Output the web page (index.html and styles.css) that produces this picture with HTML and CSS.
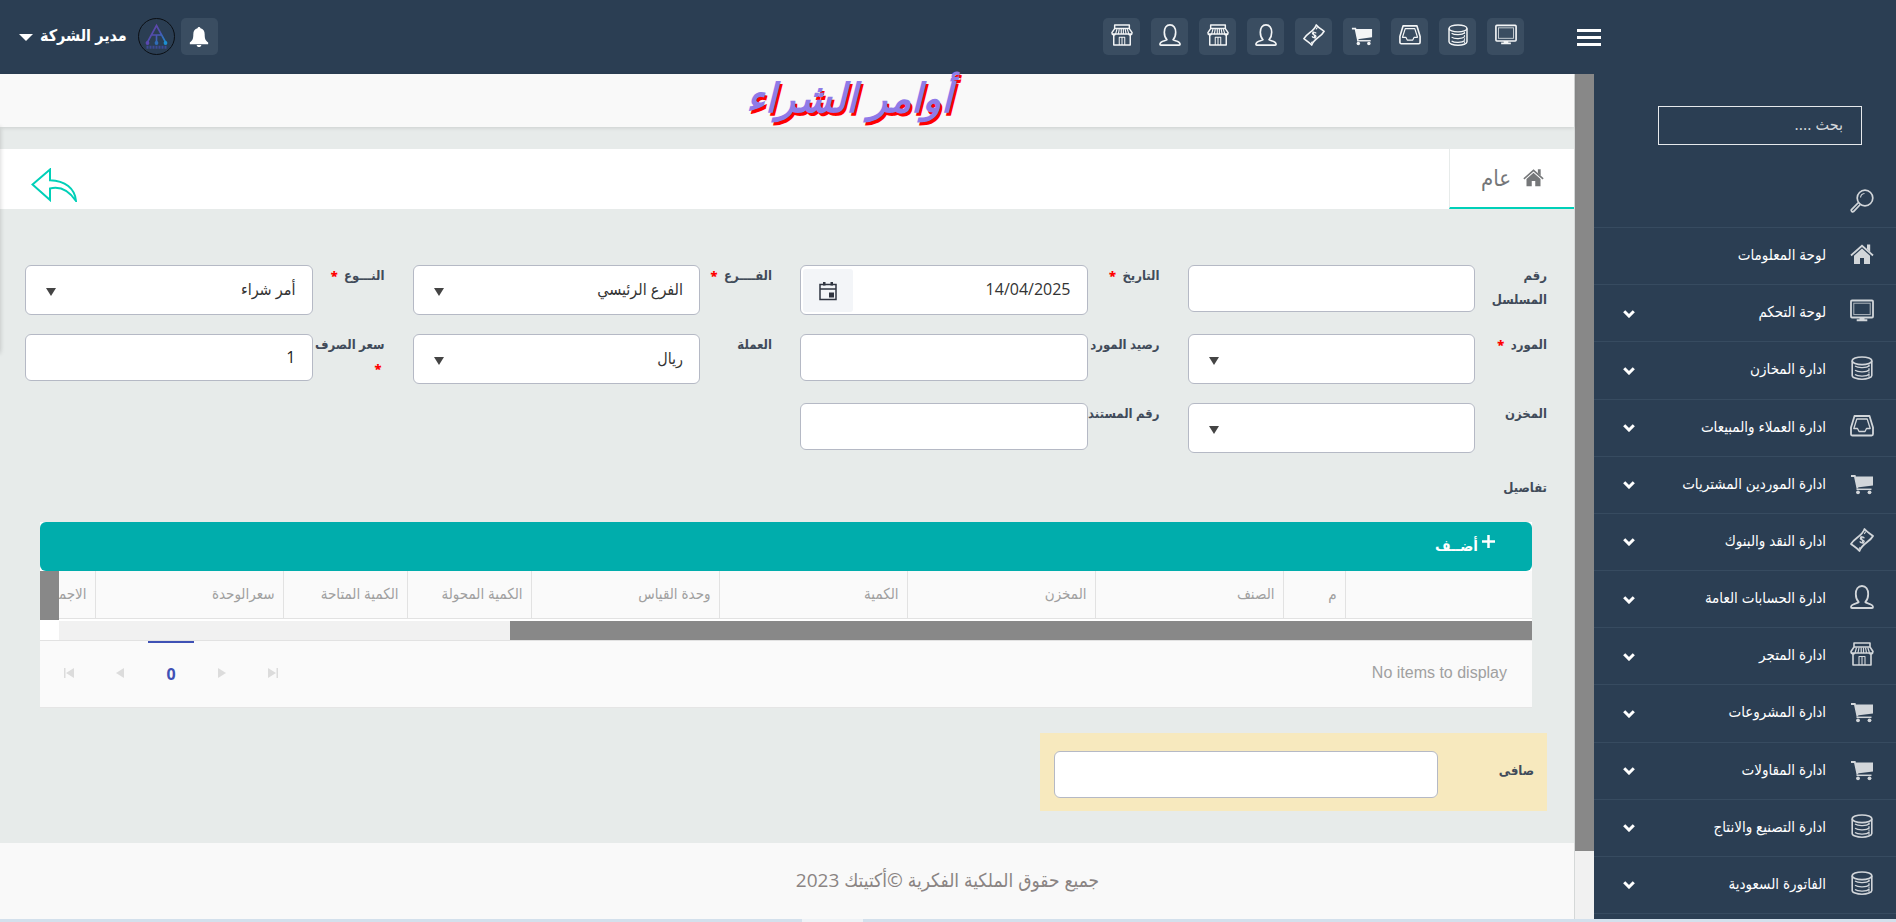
FILE: index.html
```html
<!DOCTYPE html>
<html lang="ar" dir="rtl">
<head>
  <meta charset="UTF-8" />
  <meta name="viewport" content="width=device-width, initial-scale=1.0" />
  <title>أوامر الشراء</title>
  <link rel="stylesheet" href="styles.css">
</head>
<body>

  <!-- Icons -->
  <svg class="sprite" aria-hidden="true">
    <symbol id="i-monitor" viewBox="0 0 24 24">
      <rect x="1" y="1.5" width="22" height="17" rx="1" fill="none" stroke="currentColor" stroke-width="1.8"/>
      <rect x="3.8" y="4.2" width="16.4" height="11.4" fill="none" stroke="currentColor" stroke-width="1" opacity=".8"/>
      <path d="M9.5 18.5h5v1.8h2.8v1.9H6.7v-1.9h2.8z" fill="currentColor"/>
    </symbol>
    <symbol id="i-database" viewBox="0 0 24 24">
      <g fill="none" stroke="currentColor" stroke-width="1.6">
        <ellipse cx="12" cy="4.8" rx="9.8" ry="3.8"/>
        <path d="M2.2 4.8v14.6c0 2 4.4 3.8 9.8 3.8s9.8-1.8 9.8-3.8V4.8"/>
        <path d="M5 10c3 2.2 11.5 2.2 14.5-.5M5 14.3c3 2.2 11.5 2.2 14.5-.5M5 18.5c3 2.2 11.5 2.2 14.5-.5" stroke-width="1.3"/>
        <path d="M19 8.5v13" stroke-width="1" stroke-dasharray="2 1.5"/>
      </g>
    </symbol>
    <symbol id="i-inbox" viewBox="0 0 24 24">
      <g fill="none" stroke="currentColor" stroke-linejoin="round">
        <path d="M4.5 2h15L23 13.5V20c0 .8-.5 1.5-1.5 1.5h-19C1.500 21.5 1 20.8 1 20v-6.5z" stroke-width="1.8"/>
        <path d="M6.8 5h10.4l3 9.5h-3.7l-1.5 3H9l-1.500-3H3.8z" stroke-width="1.3"/>
      </g>
    </symbol>
    <symbol id="i-cart" viewBox="0 0 24 24">
      <path d="M1 5h3.800l2.700 12.5" fill="none" stroke="currentColor" stroke-width="1.8"/>
      <path d="M5 5.500h18v9L7 16.500z" fill="currentColor"/>
      <path d="M6.500 18.300h15" stroke="currentColor" stroke-width="1.5"/>
      <circle cx="8" cy="21.3" r="1.9" fill="currentColor"/>
      <circle cx="19.5" cy="21.3" r="1.9" fill="currentColor"/>
    </symbol>
    <symbol id="i-money" viewBox="0 0 24 24">
      <g fill="none" stroke="currentColor" stroke-linejoin="round" stroke-linecap="round">
        <path d="M14.5 1c2.5 3 6 5 8.500 7C19.500 14.500 12 15.500 9.500 23 7 20 3.500 18 1 16 4.500 9.500 12 8.500 14.500 1z" stroke-width="1.8"/>
        <path d="M14 9.800c-1.200-1.300-3.800-1-3.700.6.1 1.800 3.700 1.200 3.900 3 .1 1.800-3.100 1.900-4.100.4M11 8.500l2.200 7" stroke-width="1.3"/>
        <path d="M14.500 5.500l1-1.500M10 19.500l-.8 1" stroke-width="1.2"/>
      </g>
    </symbol>
    <symbol id="i-user" viewBox="0 0 24 24">
      <path d="M12 1C8 1 5.800 4.500 5.800 9c0 3.500 1.300 6.500 2.900 8.200C7.500 18.500 1 18.500 1 22c0 .6.4 1 1 1h20c.6 0 1-.4 1-1 0-3.500-6.500-3.500-7.700-4.800C16.900 15.500 18.200 12.500 18.200 9 18.200 4.500 16 1 12 1z" fill="none" stroke="currentColor" stroke-width="1.8" stroke-linejoin="round"/>
    </symbol>
    <symbol id="i-shop" viewBox="0 0 24 24">
      <g fill="none" stroke="currentColor" stroke-width="1.6" stroke-linejoin="round">
        <path d="M4 1h16v4H4zM4 5L1 9.500c0 3 3.500 3 4 1M20 5l3 4.500c0 3-3.500 3-4 1M1.500 11h21"/>
        <path d="M3 12v11h18V12"/>
        <path d="M9 23v-8.500h6V23M12 15v8" stroke-width="1.1"/>
        <path d="M6.500 5.500L5 11M9 5.500L8 11M11.200 5.500V11M13.500 5.500V11M15.500 5.500L16.500 11M17.800 5.500L19.500 11" stroke-width="1.2"/>
      </g>
    </symbol>
    <symbol id="i-home" viewBox="0 0 24 24">
      <path d="M12 6.500l8 7.200V22h-6v-6h-4v6H4v-8.300z" fill="currentColor"/>
      <path d="M1 13.500L12 3.800l11 9.700" fill="none" stroke="currentColor" stroke-width="1.800"/>
      <path d="M17 2.500h3.200V10L17 7z" fill="currentColor"/>
    </symbol>
    <symbol id="i-search" viewBox="0 0 24 24">
      <g fill="none" stroke="currentColor" stroke-width="1.7">
        <circle cx="15" cy="9" r="7.8"/>
        <path d="M10.500 8.500c.3-2.300 1.800-3.800 4-4" stroke-width="1.2"/>
        <path d="M8.500 13.500l-7 7.200c-.8.8.9 2.900 2 2l6.800-7.200" stroke-linejoin="round"/>
      </g>
    </symbol>
    <symbol id="i-bell" viewBox="0 0 24 24">
      <path d="M12 1c.9 0 1.500.6 1.600 1.500 3 .7 4.600 3.200 4.600 6.500 0 5 1 7 3.800 9v1.800H2V18c2.800-2 3.800-4 3.800-9 0-3.300 1.600-5.800 4.600-6.500C10.500 1.600 11.100 1 12 1zM9.400 20.700h5.200c-.2 1.400-1.200 2.300-2.600 2.300s-2.400-.9-2.600-2.300z" fill="currentColor"/>
    </symbol>
    <symbol id="i-chevron" viewBox="0 0 12 8">
      <path d="M1.200 1.200L6 6l4.800-4.800" fill="none" stroke="currentColor" stroke-width="3"/>
    </symbol>
  </svg>

  <!-- Top bar -->
  <header class="topbar">
    <button class="menu-toggle" type="button" aria-label="القائمة">
      <span></span><span></span><span></span>
    </button>
    <nav class="shortcuts">
      <a class="tile" href="#"><svg><use href="#i-monitor"/></svg></a>
      <a class="tile" href="#"><svg><use href="#i-database"/></svg></a>
      <a class="tile" href="#"><svg><use href="#i-inbox"/></svg></a>
      <a class="tile" href="#"><svg><use href="#i-cart"/></svg></a>
      <a class="tile" href="#"><svg><use href="#i-money"/></svg></a>
      <a class="tile" href="#"><svg><use href="#i-user"/></svg></a>
      <a class="tile" href="#"><svg><use href="#i-shop"/></svg></a>
      <a class="tile" href="#"><svg><use href="#i-user"/></svg></a>
      <a class="tile" href="#"><svg><use href="#i-shop"/></svg></a>
    </nav>
    <div class="account">
      <button class="tile" type="button" aria-label="الإشعارات"><svg><use href="#i-bell"/></svg></button>
      <svg class="avatar" viewBox="0 0 37 37">
        <defs>
          <linearGradient id="logo" x1="0" y1="0" x2="1" y2="1">
            <stop offset="0" stop-color="#6a3fa8"/>
            <stop offset=".5" stop-color="#4f4fb0"/>
            <stop offset="1" stop-color="#1c8fd0"/>
          </linearGradient>
        </defs>
        <circle cx="18.5" cy="18.5" r="18" fill="none" stroke="#0b0f14"/>
        <path d="M9 25L18.500 7.500 28 25M13.500 17h10M18.500 17v8" fill="none" stroke="url(#logo)" stroke-width="1.6"/>
        <circle cx="9.5" cy="25" r="1.9" fill="#5a48b0"/>
        <circle cx="18.5" cy="25" r="1.9" fill="#2f6cb8"/>
        <circle cx="27.5" cy="25" r="1.9" fill="#1c8fd0"/>
        <path d="M8.500 29.300h20" stroke="#3d4a94" stroke-width="3" stroke-dasharray="2 1"/>
      </svg>
      <button class="user-name" type="button">مدير الشركة</button>
    </div>
  </header>

  <div class="layout">

    <!-- Sidebar -->
    <aside class="sidebar">
      <div class="search">
        <input type="text" placeholder="بحث ...." aria-label="بحث">
        <svg class="side-icon"><use href="#i-search"/></svg>
      </div>
      <ul class="menu">
        <li><a href="#"><svg class="side-icon"><use href="#i-home"/></svg>لوحة المعلومات</a></li>
        <li><a href="#"><svg class="side-icon"><use href="#i-monitor"/></svg>لوحة التحكم<svg class="chevron"><use href="#i-chevron"/></svg></a></li>
        <li><a href="#"><svg class="side-icon"><use href="#i-database"/></svg>ادارة المخازن<svg class="chevron"><use href="#i-chevron"/></svg></a></li>
        <li><a href="#"><svg class="side-icon"><use href="#i-inbox"/></svg>ادارة العملاء والمبيعات<svg class="chevron"><use href="#i-chevron"/></svg></a></li>
        <li><a href="#"><svg class="side-icon"><use href="#i-cart"/></svg>ادارة الموردين المشتريات<svg class="chevron"><use href="#i-chevron"/></svg></a></li>
        <li><a href="#"><svg class="side-icon"><use href="#i-money"/></svg>ادارة النقد والبنوك<svg class="chevron"><use href="#i-chevron"/></svg></a></li>
        <li><a href="#"><svg class="side-icon"><use href="#i-user"/></svg>ادارة الحسابات العامة<svg class="chevron"><use href="#i-chevron"/></svg></a></li>
        <li><a href="#"><svg class="side-icon"><use href="#i-shop"/></svg>ادارة المتجر<svg class="chevron"><use href="#i-chevron"/></svg></a></li>
        <li><a href="#"><svg class="side-icon"><use href="#i-cart"/></svg>ادارة المشروعات<svg class="chevron"><use href="#i-chevron"/></svg></a></li>
        <li><a href="#"><svg class="side-icon"><use href="#i-cart"/></svg>ادارة المقاولات<svg class="chevron"><use href="#i-chevron"/></svg></a></li>
        <li><a href="#"><svg class="side-icon"><use href="#i-database"/></svg>ادارة التصنيع والانتاج<svg class="chevron"><use href="#i-chevron"/></svg></a></li>
        <li><a href="#"><svg class="side-icon"><use href="#i-database"/></svg>الفاتورة السعودية<svg class="chevron"><use href="#i-chevron"/></svg></a></li>
      </ul>
    </aside>

    <div class="page-scroll"><div class="page-thumb"></div></div>

    <main class="content">
      <div class="page-title"><h1>أوامر الشراء</h1></div>

      <!-- Tabs -->
      <div class="tabs">
        <a class="tab" href="#"><svg><use href="#i-home"/></svg>عام</a>
        <a class="back" href="#" aria-label="رجوع">
          <svg viewBox="0 0 46 34">
            <path d="M19 1.500L1.500 16.500 19 32V20.500c8-2 17.500 0 26 12.500C44 20.500 34 12.500 19 12.200z" fill="none" stroke="currentColor" stroke-width="2"/>
          </svg>
        </a>
      </div>

      <!-- Form -->
      <form class="order">
        <div class="fields">
          <div class="field">
            <label class="wrap" for="serial">رقم المسلسل</label>
            <input class="control" type="text" id="serial">
          </div>
          <div class="field">
            <label for="date">التاريخ <b>*</b></label>
            <div class="date-box">
              <input class="control tall" type="text" id="date" value="14/04/2025">
              <button class="calendar" type="button" aria-label="التقويم">
                <svg viewBox="0 0 18 20">
                  <path d="M1 3.500h16V18.500H1zM1 8h16" fill="none" stroke="currentColor" stroke-width="1.5"/>
                  <path d="M4 1h2.500v3.500H4zM11.500 1H14v3.500h-2.500zM10 11.500h5v5h-5z" fill="currentColor"/>
                </svg>
              </button>
            </div>
          </div>
          <div class="field">
            <label for="branch">الفــــرع <b>*</b></label>
            <div class="select-box"><select class="control tall" id="branch"><option>الفرع الرئيسي</option></select></div>
          </div>
          <div class="field">
            <label for="kind">النـــوع <b>*</b></label>
            <div class="select-box"><select class="control tall" id="kind"><option>أمر شراء</option></select></div>
          </div>

          <div class="field">
            <label for="supplier">المورد <b>*</b></label>
            <div class="select-box"><select class="control tall" id="supplier"><option></option></select></div>
          </div>
          <div class="field">
            <label for="balance">رصيد المورد</label>
            <input class="control" type="text" id="balance">
          </div>
          <div class="field">
            <label for="currency">العملة</label>
            <div class="select-box"><select class="control tall" id="currency"><option>ريال</option></select></div>
          </div>
          <div class="field">
            <label class="wrap" for="rate">سعر الصرف <b>*</b></label>
            <input class="control" type="text" id="rate" value="1">
          </div>

          <div class="field">
            <label for="store">المخزن</label>
            <div class="select-box"><select class="control tall" id="store"><option></option></select></div>
          </div>
          <div class="field">
            <label for="docno">رقم المستند</label>
            <input class="control" type="text" id="docno">
          </div>
        </div>

        <h2 class="details-title">تفاصيل</h2>

        <!-- Items grid -->
        <div class="grid">
          <div class="grid-toolbar">
            <button class="add" type="button"><svg viewBox="0 0 13 13"><path d="M6.500 0v13M0 6.500h13" stroke="currentColor" stroke-width="2.5"/></svg>أضــف</button>
          </div>
          <div class="grid-head">
            <div class="grid-columns">
              <table>
                <colgroup>
                  <col class="c-tools"><col class="c-num"><col class="c-wide"><col class="c-wide"><col class="c-wide">
                  <col class="c-wide"><col class="c-mid"><col class="c-mid"><col class="c-wide"><col class="c-wide">
                </colgroup>
                <thead>
                  <tr>
                    <th></th>
                    <th>م</th>
                    <th>الصنف</th>
                    <th>المخزن</th>
                    <th>الكمية</th>
                    <th>وحدة القياس</th>
                    <th>الكمية المحولة</th>
                    <th>الكمية المتاحة</th>
                    <th>سعرالوحدة</th>
                    <th>الاجمالي</th>
                  </tr>
                </thead>
              </table>
            </div>
            <div class="grid-vscroll"></div>
          </div>
          <div class="grid-hscroll"><div class="grid-thumb"></div></div>
          <div class="pager">
            <span class="pager-info" dir="ltr">No items to display</span>
            <div class="pager-nav">
              <button type="button" aria-label="الأخير"><svg viewBox="0 0 10 10"><path d="M0 0l8 5-8 5zM8.500 0H10v10H8.500z" fill="currentColor"/></svg></button>
              <button type="button" aria-label="التالي"><svg viewBox="0 0 10 10"><path d="M1 0l8 5-8 5z" fill="currentColor"/></svg></button>
              <button type="button" class="current">0</button>
              <button type="button" aria-label="السابق"><svg viewBox="0 0 10 10"><path d="M9 0L1 5l8 5z" fill="currentColor"/></svg></button>
              <button type="button" aria-label="الأول"><svg viewBox="0 0 10 10"><path d="M10 0L2 5l8 5zM0 0h1.500v10H0z" fill="currentColor"/></svg></button>
            </div>
          </div>
        </div>

        <div class="net">
          <label for="net">صافى</label>
          <input class="control" type="text" id="net">
        </div>
      </form>

      <footer class="footer">جميع حقوق الملكية الفكرية ©أكتيتك 2023</footer>
    </main>
  </div>

  <div class="status-strip"><span></span></div>

</body>
</html>
```

FILE: styles.css
```css
* {
  box-sizing: border-box;
}

body {
  margin: 0;
  height: 100vh;
  display: flex;
  flex-direction: column;
  overflow: hidden;
  font-family: "Open Sans", "DejaVu Sans Condensed", "DejaVu Sans", sans-serif;
  font-size: 15px;
  color: #414b5a;
  background-color: #e7ebea;
}

a {
  color: inherit;
  text-decoration: none;
}

button {
  border: none;
  padding: 0;
  background: none;
  font-family: inherit;
  color: inherit;
  cursor: pointer;
}

.sprite {
  position: absolute;
  width: 0;
  height: 0;
}

/* Top bar */
.topbar {
  display: flex;
  align-items: flex-start;
  height: 74px;
  padding: 18px 295px 0 19px;
  background-color: #2b3e53;
  color: #fff;
}

.menu-toggle {
  display: flex;
  flex-direction: column;
  gap: 4px;
  width: 24px;
  margin: 11px 0 0 53px;
}

.menu-toggle span {
  width: 24px;
  height: 3px;
  background-color: #fff;
}

.shortcuts {
  display: flex;
  gap: 11px;
}

.tile {
  display: flex;
  justify-content: center;
  width: 37px;
  height: 37px;
  padding-top: 6px;
  border-radius: 5px;
  background-color: #3a4d61;
  color: #f3f5f6;
}

.tile svg {
  width: 22px;
  height: 22px;
}

.account {
  display: flex;
  margin-right: auto;
}

.account .tile {
  padding-top: 8px;
  color: #fff;
}

.avatar {
  width: 37px;
  height: 37px;
  margin: 0 6px 0 11px;
}

.user-name {
  display: flex;
  align-items: center;
  gap: 7px;
  height: 34px;
  font-size: 16px;
  font-weight: bold;
}

.user-name::after {
  content: "";
  margin-top: 5px;
  border: 7px solid transparent;
  border-top-color: #fff;
  border-bottom: none;
}

/* Layout */
.layout {
  flex: 1;
  display: flex;
  min-height: 0;
}

.sidebar {
  display: flex;
  flex-direction: column;
  flex: none;
  width: 302px;
  padding-bottom: 5px;
  background-color: #2b3e53;
  color: #fff;
}

.search {
  height: 153px;
  padding: 32px 22px 0 34px;
}

.search input {
  display: block;
  width: 204px;
  height: 39px;
  margin-right: 12px;
  padding: 0 18px 4px;
  border: 1px solid #e6e9ec;
  background: none;
  font-family: inherit;
  font-size: 16px;
  color: #d5d8dc;
}

.search input::placeholder {
  color: #d5d8dc;
  opacity: 1;
}

.search .side-icon {
  display: block;
  margin-top: 44px;
}

.side-icon {
  flex: none;
  width: 24px;
  height: 24px;
  color: #d2d6da;
}

.menu {
  flex: 1;
  display: flex;
  flex-direction: column;
  margin: 0;
  padding: 0;
  list-style: none;
  border-bottom: 1px solid #374b60;
}

.menu li {
  flex: 1;
  border-top: 1px solid #374b60;
}

.menu a {
  display: flex;
  align-items: center;
  height: 100%;
  padding: 0 22px 4px 29px;
}

.menu .side-icon {
  margin-left: 24px;
}

.chevron {
  width: 12px;
  height: 8px;
  margin: 5px auto 0 0;
}

.page-scroll {
  flex: none;
  width: 20px;
  border-left: 1px solid #d5d8d8;
  background-color: #f1f1f1;
}

.page-thumb {
  height: 92%;
  background-color: #888;
}

/* Content */
.content {
  position: relative;
  flex: 1;
  min-width: 0;
  display: flex;
  flex-direction: column;
}

.content::before {
  content: "";
  position: absolute;
  top: 53px;
  left: -10px;
  width: 10px;
  height: 226px;
  box-shadow: 0 0 5px rgba(0, 0, 0, 0.2);
}

.page-title {
  height: 53px;
  padding-left: 124px;
  background-color: #f9f9f9;
  box-shadow: 0 1px 4px rgba(0, 0, 0, 0.12);
  text-align: center;
}

h1 {
  margin: 0;
  font-size: 40px;
  line-height: 46px;
  font-style: italic;
  color: #8f7be8;
  text-shadow: 2px 3px 0 #f00;
}

.tabs {
  display: flex;
  justify-content: space-between;
  height: 60px;
  margin-top: 22px;
  background-color: #fff;
}

.tab {
  display: flex;
  align-items: center;
  gap: 12px;
  width: 125px;
  padding: 0 30px 2px 0;
  border-left: 1px solid #e7ebea;
  border-bottom: 2px solid #00d0b8;
  font-size: 22px;
  line-height: 24px;
  color: #757779;
}

.tab svg {
  width: 21px;
  height: 21px;
}

.back {
  margin: 19px 0 0 31px;
  color: #00d0b8;
}

.back svg {
  display: block;
  width: 46px;
  height: 34px;
}

/* Form */
.order {
  flex: 1;
  padding: 56px 27px 0 25px;
}

.fields {
  display: grid;
  grid-template-columns: repeat(4, 1fr);
  gap: 19px 28px;
}

.field {
  display: flex;
  align-items: flex-start;
  min-height: 50px;
}

label {
  flex: none;
  font-size: 13px;
  font-weight: bold;
  line-height: 24px;
}

.field label {
  width: 72px;
  margin-top: -2px;
  white-space: nowrap;
}

.field .wrap {
  white-space: normal;
}

label b {
  margin-right: 3px;
  color: #f00;
}

.control {
  display: block;
  flex: 1;
  width: 100%;
  min-width: 0;
  height: 47px;
  padding: 0 16px 2px;
  border: 1px solid #b5b9c5;
  border-radius: 6px;
  background-color: #fff;
  font-family: inherit;
  font-size: 16px;
  color: #222;
}

.tall {
  height: 50px;
  color: #333;
}

.select-box,
.date-box {
  position: relative;
  flex: 1;
  min-width: 0;
}

select.control {
  appearance: none;
}

.select-box::after {
  content: "";
  position: absolute;
  top: 23px;
  left: 21px;
  border: 5px solid transparent;
  border-top: 8px solid #444;
  border-bottom: none;
}

.calendar {
  position: absolute;
  top: 4px;
  left: 3px;
  width: 50px;
  height: 43px;
  border-radius: 3px;
  background-color: #f3f5f8;
  color: #2f3440;
}

.calendar svg {
  display: block;
  width: 18px;
  height: 20px;
  margin: auto;
}

.details-title {
  margin: 22px 0 0;
  font-size: 13px;
  line-height: 24px;
}

/* Items grid */
.grid {
  margin: 23px 15px 0;
  border-bottom: 1px solid #e5e5e5;
  background-color: #fff;
}

.grid-toolbar {
  height: 49px;
  padding: 10px 37px 0;
  border-radius: 6px;
  background-color: #00adac;
  color: #fff;
}

.add {
  display: flex;
  gap: 4px;
  font-size: 15px;
  font-weight: bold;
  line-height: 26px;
}

.add svg {
  width: 13px;
  height: 13px;
  margin-top: 3px;
}

.grid-head {
  display: flex;
  height: 49px;
}

.grid-columns {
  flex: 1;
  overflow: hidden;
}

.grid table {
  width: 1624px;
  table-layout: fixed;
  border-collapse: collapse;
}

.c-tools {
  width: 187px;
}

.c-num {
  width: 62px;
}

.c-wide {
  width: 188px;
}

.c-mid {
  width: 124px;
}

.grid th {
  height: 47px;
  padding: 0 8px 2px;
  border-left: 1px solid #e2e2e2;
  border-bottom: 1px solid #e2e2e2;
  background-color: #fafafa;
  font-size: 15px;
  font-weight: normal;
  line-height: 20px;
  color: #a0a0a0;
  text-align: right;
  white-space: nowrap;
}

.grid-vscroll {
  width: 19px;
  background-color: #888;
}

.grid-hscroll {
  height: 19px;
  margin: 1px 0 0 19px;
  background-color: #f1f1f1;
}

.grid-thumb {
  width: 69.4%;
  height: 100%;
  background-color: #888;
}

.pager {
  display: flex;
  justify-content: space-between;
  align-items: flex-start;
  height: 67px;
  padding: 0 25px 0 6px;
  border-top: 1px solid #e2e2e2;
  background-color: #fafafa;
}

.pager-info {
  font-family: "Liberation Sans", Arial, sans-serif;
  font-size: 16px;
  line-height: 64px;
  color: #a0a0a0;
}

.pager-nav {
  display: flex;
  gap: 5px;
}

.pager-nav button {
  width: 46px;
  height: 64px;
  color: #dcdcdc;
}

.pager-nav svg {
  width: 10px;
  height: 10px;
}

.pager-nav .current {
  border-top: 2px solid #3f51b5;
  font-size: 16px;
  font-weight: bold;
  color: #3f51b5;
}

.net {
  display: flex;
  justify-content: space-between;
  width: calc(100% / 3);
  margin-top: 25px;
  padding: 18px 13px 13px 14px;
  background-color: #f7e9be;
}

.net label {
  margin-top: 7px;
}

.net .control {
  flex: none;
  width: 80%;
}

/* Footer */
.footer {
  height: 76px;
  padding-left: 321px;
  background-color: #f9f9f9;
  font-size: 19px;
  line-height: 74px;
  color: #8a8483;
  text-align: center;
}

.status-strip {
  display: flex;
  justify-content: center;
  height: 3px;
  padding-right: 231px;
  background-color: #d3e0ec;
}

.status-strip span {
  width: 61px;
  background-color: #eef2f6;
}
```
